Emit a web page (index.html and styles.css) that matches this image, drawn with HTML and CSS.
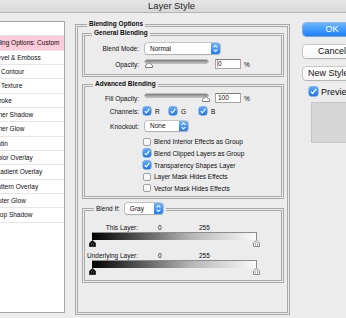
FILE: index.html
```html
<!DOCTYPE html>
<html>
<head>
<meta charset="utf-8">
<title>Layer Style</title>
<link rel="stylesheet" href="styles.css">
</head>
<body>
<div class="titlebar"><span class="title">Layer Style</span></div>
<div class="main">
  <ul class="styles">
    <li class="lvl0 head">Styles</li>
    <li class="lvl0 sel">Blending Options: Custom</li>
    <li>Bevel &amp; Emboss</li>
    <li class="lvl2">Contour</li>
    <li class="lvl2">Texture</li>
    <li>Stroke</li>
    <li>Inner Shadow</li>
    <li>Inner Glow</li>
    <li>Satin</li>
    <li>Color Overlay</li>
    <li>Gradient Overlay</li>
    <li>Pattern Overlay</li>
    <li>Outer Glow</li>
    <li>Drop Shadow</li>
  </ul>

  <div class="group outer">
    <div class="legend lg-outer">Blending Options</div>

    <div class="group general">
      <div class="legend lg-general">General Blending</div>
      <div class="row r-mode">
        <span class="lbl">Blend Mode:</span>
        <div class="select w-mode"><span class="val">Normal</span><span class="step"><svg width="9" height="11" viewBox="0 0 9 11"><path d="M2.6 4.4 L4.5 2.6 L6.4 4.4 M2.6 6.6 L4.5 8.4 L6.4 6.6" fill="none" stroke="#fff" stroke-width="1.1"/></svg></span></div>
      </div>
      <div class="row r-op">
        <span class="lbl">Opacity:</span>
        <div class="slider"><div class="track"></div><svg class="knob knob-l" width="8" height="6" viewBox="0 0 8 6"><polygon points="4,0.5 7.5,3.6 7.5,5.5 0.5,5.5 0.5,3.6" fill="#fff" stroke="#6b6b6b" stroke-width="0.9"/></svg></div>
        <div class="field"><span class="caret">0</span></div>
        <span class="pct">%</span>
      </div>
    </div>

    <div class="group advanced">
      <div class="legend lg-adv">Advanced Blending</div>
      <div class="row r-fill">
        <span class="lbl">Fill Opacity:</span>
        <div class="slider"><div class="track"></div><svg class="knob knob-r" width="8" height="6" viewBox="0 0 8 6"><polygon points="4,0.5 7.5,3.6 7.5,5.5 0.5,5.5 0.5,3.6" fill="#fff" stroke="#6b6b6b" stroke-width="0.9"/></svg></div>
        <div class="field">100</div>
        <span class="pct">%</span>
      </div>
      <div class="row r-ch">
        <span class="lbl lbl-ch">Channels:</span>
        <span class="ch ch-r"><span class="cb on"><svg width="8" height="8" viewBox="0 0 8 8"><path d="M1.7 4.1 L3.3 5.8 L6.4 1.9" fill="none" stroke="#fff" stroke-width="1.2"/></svg></span><span class="cht">R</span></span>
        <span class="ch ch-g"><span class="cb on"><svg width="8" height="8" viewBox="0 0 8 8"><path d="M1.7 4.1 L3.3 5.8 L6.4 1.9" fill="none" stroke="#fff" stroke-width="1.2"/></svg></span><span class="cht">G</span></span>
        <span class="ch"><span class="cb on"><svg width="8" height="8" viewBox="0 0 8 8"><path d="M1.7 4.1 L3.3 5.8 L6.4 1.9" fill="none" stroke="#fff" stroke-width="1.2"/></svg></span><span class="cht">B</span></span>
      </div>
      <div class="row r-ko">
        <span class="lbl">Knockout:</span>
        <div class="select w-ko"><span class="val">None</span><span class="step"><svg width="9" height="10" viewBox="0 0 9 10"><path d="M2.6 3.9 L4.5 2.1 L6.4 3.9 M2.6 6.1 L4.5 7.9 L6.4 6.1" fill="none" stroke="#fff" stroke-width="1.1"/></svg></span></div>
      </div>
      <div class="opts">
        <div class="opt"><span class="cb off"></span><span>Blend Interior Effects as Group</span></div>
        <div class="opt"><span class="cb on"><svg width="8" height="8" viewBox="0 0 8 8"><path d="M1.7 4.1 L3.3 5.8 L6.4 1.9" fill="none" stroke="#fff" stroke-width="1.2"/></svg></span><span>Blend Clipped Layers as Group</span></div>
        <div class="opt"><span class="cb on"><svg width="8" height="8" viewBox="0 0 8 8"><path d="M1.7 4.1 L3.3 5.8 L6.4 1.9" fill="none" stroke="#fff" stroke-width="1.2"/></svg></span><span>Transparency Shapes Layer</span></div>
        <div class="opt"><span class="cb off"></span><span>Layer Mask Hides Effects</span></div>
        <div class="opt"><span class="cb off"></span><span>Vector Mask Hides Effects</span></div>
      </div>
    </div>

    <div class="group blendif">
      <div class="legend lg-bi">
        <span class="bi-lbl">Blend If:</span>
        <div class="select w-gray"><span class="val">Gray</span><span class="step"><svg width="9" height="11" viewBox="0 0 9 11"><path d="M2.6 4.4 L4.5 2.6 L6.4 4.4 M2.6 6.6 L4.5 8.4 L6.4 6.6" fill="none" stroke="#fff" stroke-width="1.1"/></svg></span></div>
      </div>
      <div class="bl-row first"><span class="bl-lbl">This Layer:</span><span class="v0">0</span><span>255</span></div>
      <div class="bar"></div>
      <div class="thumbs">
        <svg width="7" height="7" viewBox="0 0 7 7"><polygon points="3.5,0.5 6.5,3 6.5,6.5 0.5,6.5 0.5,3" fill="#000" stroke="#222" stroke-width="0.8"/><path d="M2.4 5.6 V3.6 L3.5 2.6 L4.6 3.6 V5.6" fill="none" stroke="#777" stroke-width="0.6"/></svg>
        <svg width="7" height="7" viewBox="0 0 7 7"><polygon points="3.5,0.5 6.5,3 6.5,6.5 0.5,6.5 0.5,3" fill="#fff" stroke="#6f6f6f" stroke-width="0.8"/><path d="M2.4 5.6 V3.6 L3.5 2.6 L4.6 3.6 V5.6" fill="none" stroke="#555" stroke-width="0.6"/></svg>
      </div>
      <div class="bl-row second"><span class="bl-lbl">Underlying Layer:</span><span class="v0">0</span><span>255</span></div>
      <div class="bar"></div>
      <div class="thumbs">
        <svg width="7" height="7" viewBox="0 0 7 7"><polygon points="3.5,0.5 6.5,3 6.5,6.5 0.5,6.5 0.5,3" fill="#000" stroke="#222" stroke-width="0.8"/><path d="M2.4 5.6 V3.6 L3.5 2.6 L4.6 3.6 V5.6" fill="none" stroke="#777" stroke-width="0.6"/></svg>
        <svg width="7" height="7" viewBox="0 0 7 7"><polygon points="3.5,0.5 6.5,3 6.5,6.5 0.5,6.5 0.5,3" fill="#fff" stroke="#6f6f6f" stroke-width="0.8"/><path d="M2.4 5.6 V3.6 L3.5 2.6 L4.6 3.6 V5.6" fill="none" stroke="#555" stroke-width="0.6"/></svg>
      </div>
    </div>
  </div>

  <div class="actions">
    <div class="btn ok">OK</div>
    <div class="btn">Cancel</div>
    <div class="btn last">New Style...</div>
    <div class="prev"><span class="cb on big"><svg width="9" height="9" viewBox="0 0 9 9"><path d="M1.9 4.6 L3.7 6.5 L7.1 2.1" fill="none" stroke="#fff" stroke-width="1.3"/></svg></span><span class="prev-t">Preview</span></div>
    <div class="swatch"></div>
  </div>
</div>
</body>
</html>
```

FILE: styles.css
```css
html, body {
  margin: 0;
  padding: 0;
}
body {
  width: 346px;
  height: 318px;
  overflow: hidden;
  background: #ececec;
  font-family: "Liberation Sans", Arial, sans-serif;
  font-size: 6.5px;
  color: #0d0d0d;
}

/* title bar */
.titlebar {
  height: 12px;
  border-bottom: 1px solid #b4b4b4;
  background: linear-gradient(#e6e6e6, #d8d8d8);
  text-align: center;
}
.title {
  display: block;
  font-size: 9.4px;
  line-height: 12px;
  padding-right: 3px;
  color: #262626;
}

.main {
  display: flex;
  align-items: flex-start;
}

/* styles list */
.styles {
  list-style: none;
  margin: 8px 0 0 -50px;
  padding: 0;
  width: 115px;
  height: 292px;
  box-sizing: border-box;
  background: #fff;
  border: 1px solid #a4a4a4;
  flex-shrink: 0;
  overflow: hidden;
}
.styles li {
  height: 14.33px;
  line-height: 14px;
  box-sizing: border-box;
  border-bottom: 1px solid #e6e6e6;
  padding-left: 42px;
  white-space: nowrap;
}
.styles li.lvl0 { padding-left: 33px; }
.styles li.head { padding-left: 28px; font-weight: bold; }
.styles li.lvl2 { padding-left: 50px; }
.styles li.sel { background: #fccad8; }

/* group boxes */
.group {
  border: 3px double #a9a9a9;
  box-sizing: border-box;
  flex-shrink: 0;
}
.legend {
  font-weight: bold;
  height: 8px;
  line-height: 8px;
  margin-top: -7px;
  padding: 0 2px;
  background: #ececec;
  width: max-content;
}
.outer {
  width: 215px;
  height: 291px;
  margin: 11px 0 0 10px;
  padding-left: 4px;
}
.lg-outer { margin-left: 5px; }
.general, .advanced, .blendif { width: 202px; }
.general { height: 44px; margin-top: 5px; }
.advanced { height: 115px; margin-top: 7px; }
.blendif { height: 75px; margin-top: 9px; }
.lg-general { margin-left: 7px; }
.lg-adv { margin-left: 8px; }

/* rows */
.row {
  display: flex;
  align-items: center;
}
.lbl {
  width: 54px;
  text-align: right;
  margin-right: 6px;
  flex-shrink: 0;
}
.lbl-ch { margin-right: 4px; }
.r-mode { height: 11px; margin-top: 6px; }
.r-op { height: 10px; margin-top: 5px; }
.r-fill { height: 10px; margin-top: 5px; }
.r-ch { height: 10px; margin-top: 3px; }
.r-ko { height: 10px; margin-top: 5px; }

/* popup select */
.select {
  display: flex;
  height: 11px;
  background: #fff;
  border-radius: 2.5px;
  box-shadow: 0 0 0 0.6px #a2a2a2, 0 0.6px 1px rgba(0, 0, 0, 0.22);
  flex-shrink: 0;
}
.select .val {
  flex: 1;
  padding-left: 5px;
  line-height: 11px;
}
.select .step {
  width: 9px;
  height: 11px;
  border-radius: 0 2.5px 2.5px 0;
  background: linear-gradient(#6db2fb, #1f7cf1);
}
.select .step svg { display: block; }
.w-mode { width: 75px; }
.w-ko { width: 43px; height: 10px; }
.w-ko .val { line-height: 10px; }
.w-ko .step { height: 10px; }
.w-gray { width: 38px; }

/* slider */
.slider {
  position: relative;
  width: 63px;
  height: 10px;
  flex-shrink: 0;
}
.track {
  margin-top: 1px;
  height: 3px;
  border-radius: 2px;
  background: linear-gradient(#7a7a7a, #bdbdbd);
  box-shadow: 0 0 0 0.5px #8c8c8c;
}
.knob {
  position: absolute;
  top: 2.5px;
}
.knob-l { left: 0; }
.knob-r { right: -2px; }

.field {
  width: 26px;
  height: 10px;
  margin-left: 7px;
  box-sizing: border-box;
  background: #fff;
  border: 1px solid #a7a7a7;
  border-top-color: #7c7c7c;
  padding-left: 2px;
  line-height: 8px;
  flex-shrink: 0;
}
.caret {
  border-left: 1px solid #e58aa6;
  margin-left: -1px;
}
.pct { margin-left: 3px; }

/* checkboxes */
.cb {
  display: block;
  width: 8px;
  height: 8px;
  box-sizing: border-box;
  border-radius: 2px;
  flex-shrink: 0;
}
.cb svg { display: block; }
.cb.on {
  background: linear-gradient(#5eaafa, #1a76ec);
  box-shadow: 0 0 0 0.4px #2a72cf;
}
.cb.off {
  background: linear-gradient(#fff, #f1f1f1);
  border: 1px solid #a1a1a1;
}
.cb.big { width: 9px; height: 9px; }

.ch {
  display: flex;
  align-items: center;
}
.ch-r { width: 26px; }
.ch-g { width: 30px; }
.cht { margin-left: 4px; }

.opts { margin-top: 5px; }
.opt {
  display: flex;
  align-items: center;
  height: 11.67px;
  padding-left: 58px;
}
.opt .cb { margin-right: 3px; }

/* blend if */
.lg-bi {
  display: flex;
  align-items: center;
  height: 11px;
  line-height: 11px;
  margin-top: -8px;
  margin-left: 9px;
  padding: 0 3px 0 2px;
  font-weight: normal;
}
.bi-lbl { margin-right: 5px; }
.bl-row {
  display: flex;
  height: 8px;
  line-height: 8px;
}
.bl-row.first { margin-top: 10px; }
.bl-row.second { margin-top: 5px; }
.bl-lbl {
  width: 53px;
  text-align: right;
}
.v0 {
  margin-left: 20px;
  width: 41px;
}
.bar {
  margin-left: 7px;
  width: 165px;
  height: 8px;
  box-sizing: border-box;
  border-top: 1px solid #8d8d8d;
  border-right: 1px solid #8d8d8d;
  background: linear-gradient(to right, #000 0%, #4a4a4a 25%, #b5b5b5 60%, #fafafa 100%);
}
.thumbs {
  display: flex;
  justify-content: space-between;
  margin-left: 4px;
  width: 171px;
  height: 7px;
}
.thumbs svg { display: block; }

/* right actions */
.actions {
  margin: 10px 0 0 13px;
  width: 60px;
  flex-shrink: 0;
}
.btn {
  width: 58px;
  height: 13px;
  line-height: 13px;
  border-radius: 3.5px;
  text-align: center;
  font-size: 9px;
  color: #111;
  background: linear-gradient(#ffffff, #f6f6f6);
  box-shadow: 0 0 0 0.6px #a9a9a9, 0 0.7px 1px rgba(0, 0, 0, 0.2);
  margin-bottom: 9px;
  white-space: nowrap;
}
.btn.ok {
  color: #fff;
  background: linear-gradient(#6cb5fc, #1b80fa);
  box-shadow: 0 0 0 0.6px #3a86e6, 0 0.7px 1px rgba(0, 0, 0, 0.2);
}
.btn.last { margin-bottom: 7px; }
.prev {
  display: flex;
  align-items: center;
  height: 9px;
  padding-left: 6px;
  font-size: 9px;
  white-space: nowrap;
}
.prev-t { margin-left: 3px; }
.swatch {
  margin: 6px 0 0 8px;
  width: 60px;
  height: 41px;
  box-sizing: border-box;
  background: #d6d6d6;
  border: 1px solid #c4c4c4;
}
```
